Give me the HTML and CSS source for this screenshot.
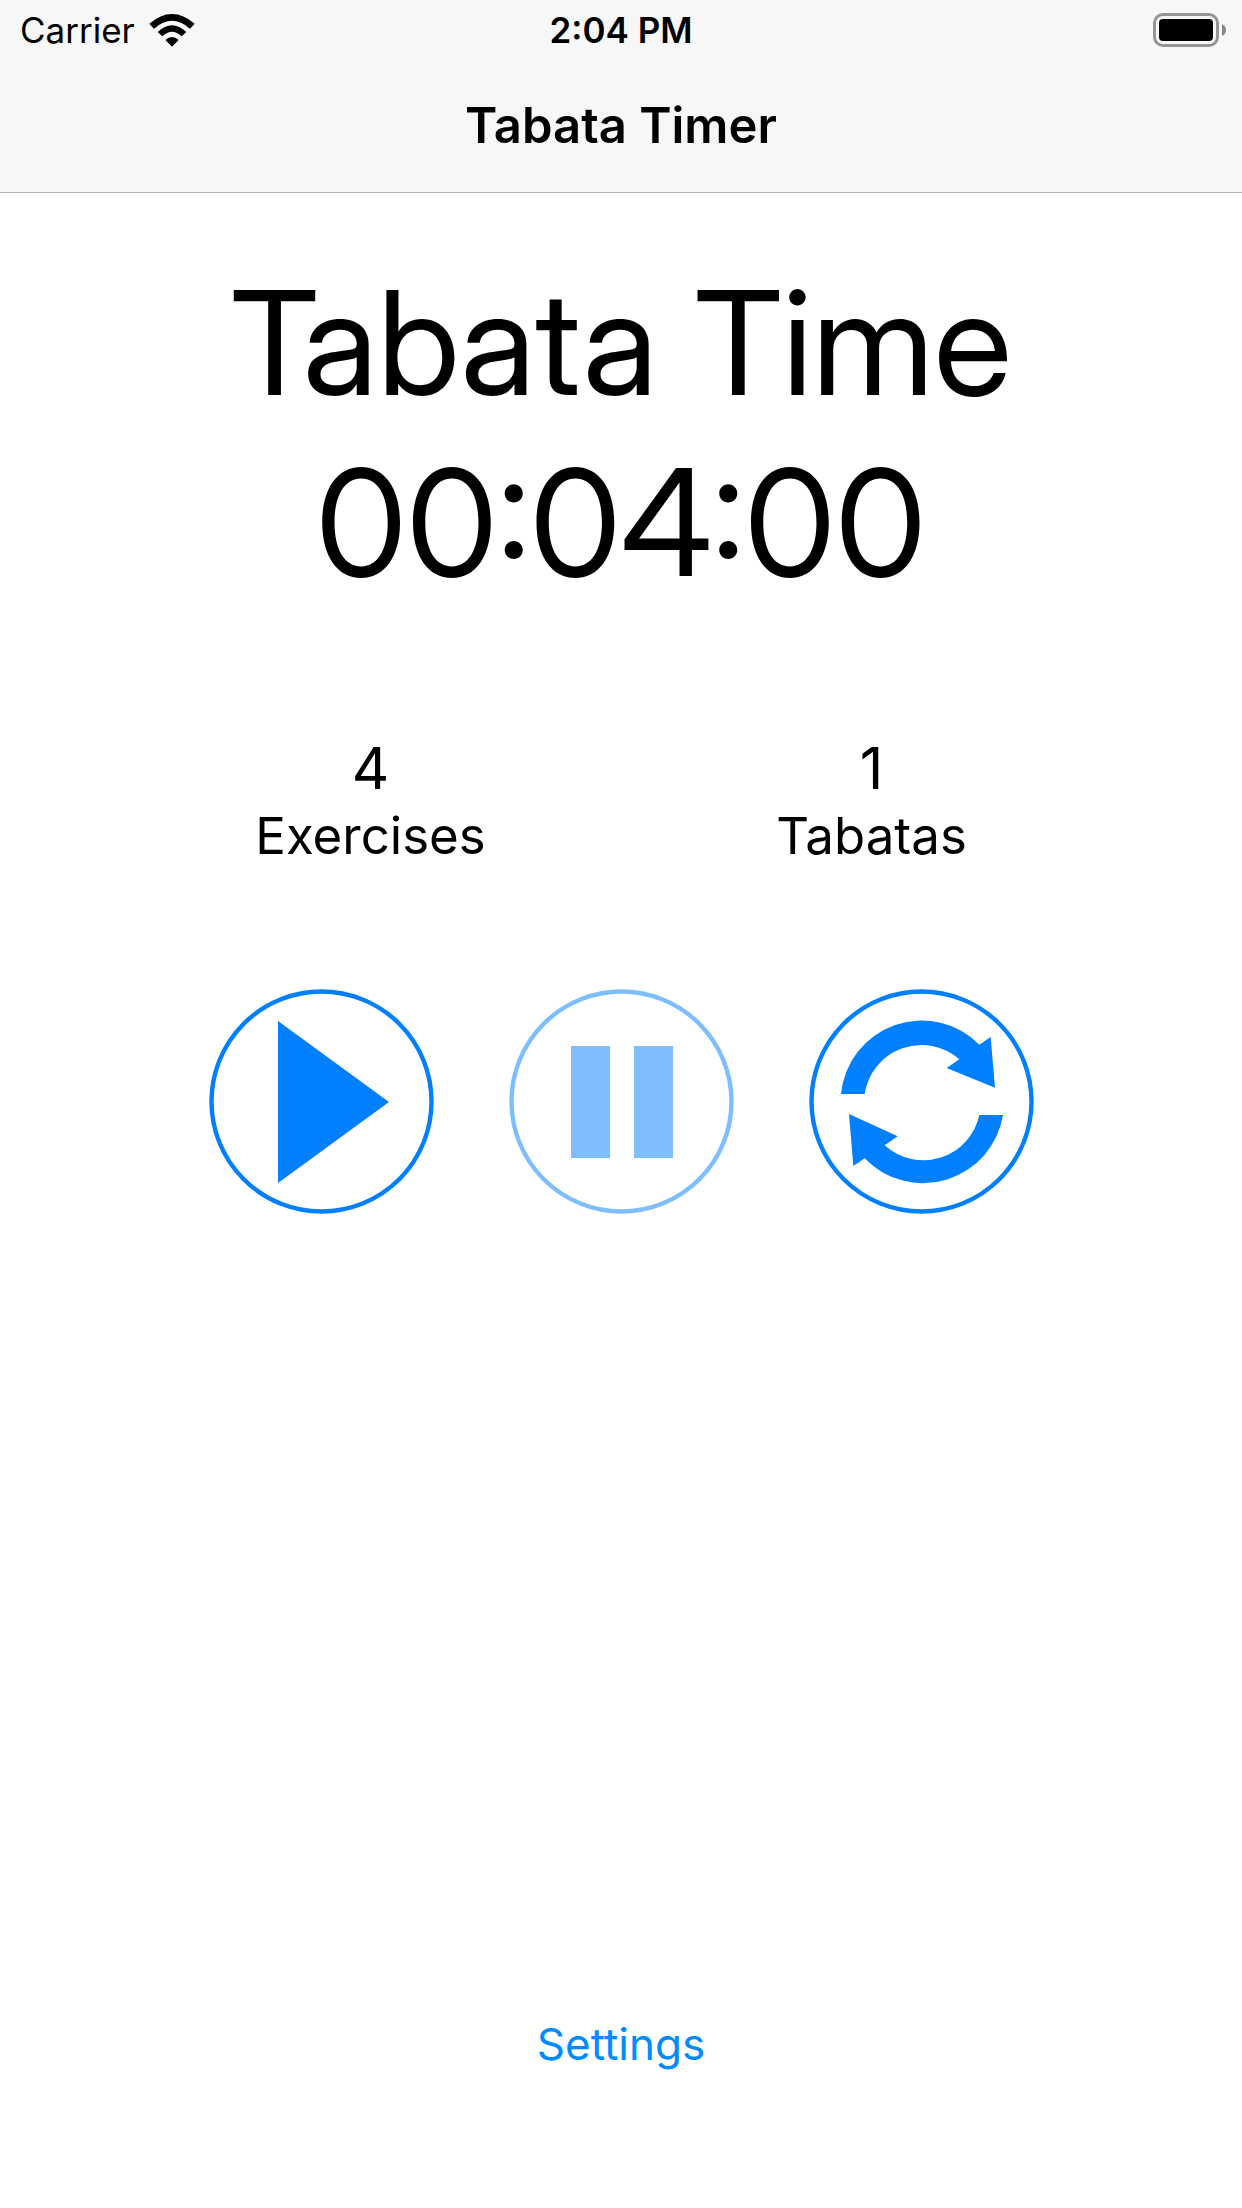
FILE: index.html
```html
<!DOCTYPE html>
<html lang="en">
<head>
<meta charset="utf-8">
<meta name="viewport" content="width=device-width, initial-scale=1">
<title>Tabata Timer</title>
<link rel="stylesheet" href="styles.css">
</head>
<body>
<header class="top-bar">
  <div class="status-bar">
    <div class="carrier">
      <span>Carrier</span>
      <svg class="wifi" viewBox="0 0 138 99" aria-hidden="true">
        <path d="M1 29Q69-29 137 29L123 44Q69-4 15 44Z"/>
        <path d="M26 54Q69 13 112 54L98 67Q69 40 40 67Z"/>
        <path d="M49 78Q69 60 89 78L69 98Z"/>
      </svg>
    </div>
    <time class="clock">2:04 PM</time>
    <svg class="battery" viewBox="0 0 74 34" aria-hidden="true">
      <rect class="battery-case" x="1.5" y="1.5" width="63" height="31" rx="8.5"/>
      <rect x="6" y="6" width="54" height="22" rx="4"/>
      <path class="battery-tip" d="M69 11Q73 13 73 17T69 23Z"/>
    </svg>
  </div>
  <h1 class="nav-title">Tabata Timer</h1>
</header>
<main class="timer">
  <h2 class="display">Tabata Time</h2>
  <div class="display display-digits">00:04:00</div>
  <dl class="stats">
    <div class="stat"><dt>Exercises</dt><dd>4</dd></div>
    <div class="stat"><dt>Tabatas</dt><dd>1</dd></div>
  </dl>
  <div class="controls">
    <button class="control" type="button" aria-label="Start">
      <svg viewBox="0 0 225 225"><circle class="ring" cx="112.5" cy="112.5" r="110"/><path d="M69 32L180 113L69 194Z"/></svg>
    </button>
    <button class="control" type="button" aria-label="Pause" disabled>
      <svg viewBox="0 0 225 225"><circle class="ring" cx="112.5" cy="112.5" r="110"/><path d="M62 57h39v112H62zM125 57h39v112h-39z"/></svg>
    </button>
    <button class="control" type="button" aria-label="Reset">
      <svg viewBox="0 0 225 225">
        <circle class="ring" cx="112.5" cy="112.5" r="110"/>
        <g transform="scale(.3333) translate(-27 -27)">
          <path d="M123 342A243 243 0 0 1 538 194L572 171L585 323L440 264L478 238A172 172 0 0 0 194 342Z"/>
          <path d="M609 405A243 243 0 0 1 194 535L160 558L147 402L293 469L254 496A172 172 0 0 0 538 405Z"/>
        </g>
      </svg>
    </button>
  </div>
  <a class="settings" href="#settings">Settings</a>
</main>
</body>
</html>
```
FILE: styles.css
```css
* {
  box-sizing: border-box;
}

body {
  margin: 0;
  min-height: 100vh;
  display: flex;
  flex-direction: column;
  background: #fff;
  color: #000;
  font-family: Inter, "Liberation Sans", sans-serif;
}

.top-bar {
  background: #f7f7f7;
  border-bottom: 1px solid #b2b2b2;
}

.status-bar {
  display: grid;
  grid-template-columns: 1fr auto 1fr;
  align-items: center;
  height: 60px;
  padding: 0 15px;
  font-size: 35px;
}

.carrier {
  display: flex;
  align-items: center;
  gap: 14px;
  padding-left: 5px;
}

.wifi {
  width: 46px;
  height: 33px;
}

.clock {
  font-weight: 600;
}

.battery {
  justify-self: end;
  width: 74px;
  height: 34px;
}

.battery-case {
  fill: none;
  stroke: #959595;
  stroke-width: 3;
}

.battery-tip {
  fill: #868686;
}

.nav-title {
  margin: 0;
  font-size: 49px;
  font-weight: 600;
  line-height: 132px;
  text-align: center;
}

.timer {
  flex: 1;
  display: flex;
  flex-direction: column;
  padding: 60px 0 136px;
}

.display {
  margin: 0;
  font-family: "Inter Display", Inter, "Liberation Sans", sans-serif;
  font-size: 145px;
  font-weight: 400;
  line-height: 180px;
  text-align: center;
}

.display-digits {
  font-size: 148px;
}

.stats {
  display: grid;
  grid-template-columns: 1fr 1fr;
  margin: 120px 120px 0;
  text-align: center;
}

.stat {
  display: flex;
  flex-direction: column-reverse;
}

.stat dt {
  font-size: 51px;
  line-height: 66px;
}

.stat dd {
  margin: 0;
  font-size: 58px;
  line-height: 70px;
}

.controls {
  display: flex;
  justify-content: center;
  gap: 75px;
  margin-top: 120px;
}

.control {
  width: 225px;
  height: 225px;
  padding: 0;
  border: 0;
  border-radius: 50%;
  background: none;
  color: #007fff;
}

.control:disabled {
  opacity: 0.5;
}

.control svg {
  display: block;
  width: 100%;
  height: 100%;
  fill: currentColor;
}

.control .ring {
  fill: none;
  stroke: currentColor;
  stroke-width: 4.4;
}

.settings {
  align-self: center;
  margin-top: auto;
  color: #008bff;
  font-size: 44px;
  line-height: 56px;
  text-decoration: none;
}
```
